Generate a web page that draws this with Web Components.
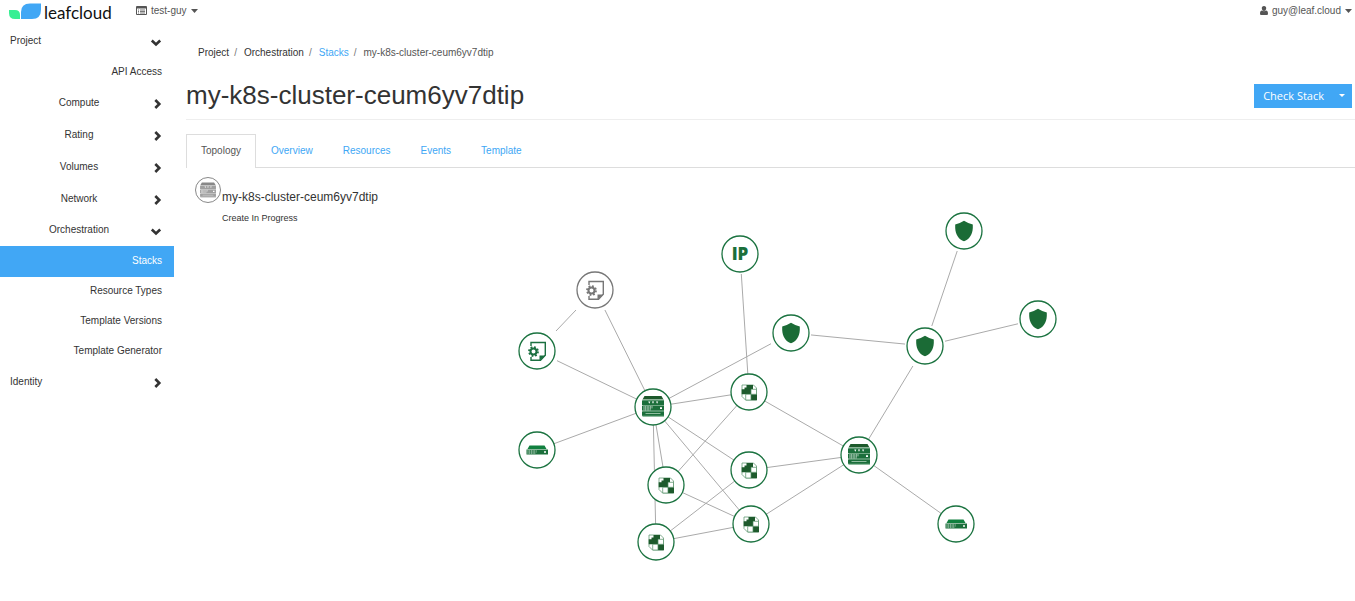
<!DOCTYPE html>
<html lang="en">
<head>
<meta charset="utf-8">
<title>my-k8s-cluster-ceum6yv7dtip - leafcloud</title>
<style>
body { margin: 0; background: #fff; color: #333; font: 10px/16px "Liberation Sans", Arial, sans-serif; --blue: #41a7f5; }
</style>
</head>
<body>
<app-shell>
  <top-bar slot="top"></top-bar>
  <side-nav slot="side">
    <nav-group label="Project" level="top" open>
      <nav-link>API Access</nav-link>
      <nav-group label="Compute"></nav-group>
      <nav-group label="Rating"></nav-group>
      <nav-group label="Volumes"></nav-group>
      <nav-group label="Network"></nav-group>
      <nav-group label="Orchestration" open>
        <nav-link active>Stacks</nav-link>
        <nav-link>Resource Types</nav-link>
        <nav-link>Template Versions</nav-link>
        <nav-link>Template Generator</nav-link>
      </nav-group>
    </nav-group>
    <nav-group label="Identity" level="top"></nav-group>
  </side-nav>
  <bread-crumbs></bread-crumbs>
  <page-title>my-k8s-cluster-ceum6yv7dtip</page-title>
  <tab-bar></tab-bar>
  <stack-topology></stack-topology>
</app-shell>
<script>
const define = (name, html, setup) => customElements.define(name, class extends HTMLElement {
  constructor() {
    super();
    const t = document.createElement('template');
    t.innerHTML = html;
    this.attachShadow({ mode: 'open' }).append(t.content.cloneNode(true));
    if (setup) setup(this, this.shadowRoot);
  }
});

define('app-shell', `
<style>
:host { display: block; }
.cols { display: grid; grid-template-columns: 174px minmax(0, 1fr); }
main { padding: 19px 0 0 12px; }
</style>
<slot name="top"></slot>
<div class="cols"><slot name="side"></slot><main><slot></slot></main></div>`);

define('top-bar', `
<style>
:host { display: block; color: #555; }
header { display: flex; align-items: flex-start; height: 26px; box-sizing: border-box; padding: 2px 3px 0 9px; }
a { display: flex; color: #111; text-decoration: none; }
.logo { width: 115px; height: 22px; margin-right: 12px; }
button { display: flex; align-items: center; gap: 4px; padding: 0; border: 0; background: none; color: inherit; font: inherit; height: 17px; }
.user { margin-left: auto; }
</style>
<header>
  <a class="logo" href="#" aria-label="leafcloud home">
    <svg width="115" height="22" viewBox="0 0 115 22">
      <path fill="#37ef93" d="M0 8h6q5 0 5 5v4H6q-6 0-6-6z"/>
      <path fill="#41a7f5" d="M12 17V10q0-8.500 9-8.500h11v6q0 9.500-9 9.500z"/>
      <text x="35" y="17" font-family="Lato, sans-serif" font-size="17" fill="#111">leafcloud</text>
    </svg>
  </a>
  <button type="button">
    <svg width="11" height="10" viewBox="0 0 11 10"><path fill="#555" fill-rule="evenodd" d="M0 1q0-1 1-1h9q1 0 1 1v7q0 1-1 1H1q-1 0-1-1zM1 2.500v5.500h9V2.500z"/><path stroke="#555" stroke-width=".8" d="M2 4h1M4 4h5M2 5.500h1M4 5.500h5M2 7h1M4 7h5"/></svg>
    test-guy
    <svg width="7" height="4" viewBox="0 0 7 4"><path fill="#555" d="M0 0h7L3.500 4z"/></svg>
  </button>
  <button type="button" class="user">
    <svg width="8" height="9" viewBox="0 0 8 9"><path fill="#555" d="M4 0c1.600 0 2.200 1 2.200 2.200S5.400 5 4 5 1.800 3.400 1.800 2.200 2.400 0 4 0zM0 7.500C0 5.500.8 4.500 2 4.500q2 1.500 4 0c1.200 0 2 1 2 3Q8 9 7 9H1Q0 9 0 7.500z"/></svg>
    guy@leaf.cloud
    <svg width="7" height="4" viewBox="0 0 7 4"><path fill="#555" d="M0 0h7L3.500 4z"/></svg>
  </button>
</header>`);

define('side-nav', `<style>:host { display: block; } nav { display: block; }</style><nav><slot></slot></nav>`);

define('nav-group', `
<style>
:host { display: block; }
button { display: flex; align-items: center; width: 100%; height: 32px; padding: 0 10px 1px 10px; border: 0; background: none; color: inherit; font: inherit; text-align: center; }
:host([open]) > button { height: 31px; }
span { flex: 1; }
:host([level=top]) span { text-align: left; }
svg { flex: none; }
:host(:not([open])) div { display: none; }
</style>
<button type="button"><span></span></button><div><slot></slot></div>`, (el, root) => {
  const open = el.hasAttribute('open');
  const b = root.querySelector('button');
  b.setAttribute('aria-expanded', open);
  root.querySelector('span').textContent = el.getAttribute('label');
  b.insertAdjacentHTML('beforeend', `<svg width="16" height="12" viewBox="0 0 16 12"><path fill="none" stroke="#333" stroke-width="2.600" d="${open ? 'M3.800 5.500l4.200 4 4.200-4' : 'M7.300 3l4 4-4 4'}"/></svg>`);
});

define('nav-link', `
<style>
:host { display: block; }
a { display: block; height: 30px; padding-right: 12px; text-align: right; line-height: 30px; color: inherit; text-decoration: none; }
:host([active]) a { height: 31px; margin-bottom: -1px; background: var(--blue); color: #fff; }
</style>
<a href="#"><slot></slot></a>`);

define('bread-crumbs', `
<style>
:host { display: block; }
ol { display: flex; margin: 0; padding: 0 12px; list-style: none; }
li + li::before { content: "/"; padding: 0 7px 0 5px; color: #777; }
a { color: #333; text-decoration: none; }
.link { color: var(--blue); }
.here { color: #555; }
</style>
<ol><li><a href="#">Project</a></li><li><a href="#">Orchestration</a></li><li><a class="link" href="#">Stacks</a></li><li class="here">my-k8s-cluster-ceum6yv7dtip</li></ol>`);

define('page-title', `
<style>
:host { display: block; }
header { display: flex; align-items: center; justify-content: space-between; height: 47px; margin: 11px 0 14px; padding-right: 3px; border-bottom: 1px solid #eee; }
h1 { margin: 0; padding-bottom: 2px; font-size: 26px; line-height: 32px; font-weight: 400; }
.split { display: flex; color: #fff; }
button { height: 24px; border: 0; padding: 0 8px 0 9px; background: var(--blue); color: inherit; font: 11px/16px "Open Sans", sans-serif; }
.more { display: flex; align-items: center; padding: 0 7px; }
</style>
<header><h1><slot></slot></h1>
<div class="split"><button type="button">Check Stack</button><button type="button" class="more" aria-label="More actions"><svg width="6" height="3" viewBox="0 0 6 3"><path fill="#fff" d="M0 0h6L3 3z"/></svg></button></div></header>`);

define('tab-bar', `
<style>
:host { display: block; }
ul { display: flex; margin: 0; padding: 0; list-style: none; border-bottom: 1px solid #ddd; }
a { display: block; padding: 0 14px 1px; border: 1px solid transparent; border-bottom: 0; line-height: 31px; color: var(--blue); text-decoration: none; }
.on { margin-bottom: -1px; padding-bottom: 2px; border-color: #ddd; background: #fff; color: #555; }
</style>
<ul><li><a class="on" href="#">Topology</a></li><li><a href="#">Overview</a></li><li><a href="#">Resources</a></li><li><a href="#">Events</a></li><li><a href="#">Template</a></li></ul>`);

const server = (a, b, c) => `
  <path fill="${b}" d="M-8.500-11H8.500L10.500-7.500H-10.500z"/>
  <path fill="${c}" d="M-10.500-7.500h21.500v17.500h-21.500z"/>
  <path fill="${a}" d="M-11-6.500h22v4.500h-22zM-11-1.200h22v4.700h-22zM-11 4.600h22v4.200h-22z"/>
  <path fill="#fff" d="M-4.800-5.500h2.200l-1.100 2.200zM-1.100-5.500h2.200L0-3.300zM3-5.500h2.200L4.100-3.300zM7 .300h2v1.700H7z"/>
  <path stroke="#fff" stroke-width=".700" stroke-dasharray="1 .600" d="M-9.500-.300h9M-9.500 .800h9M-9.500 1.900h8M-9.500 3h7"/>
  <path fill="${c}" d="M-7.500 6h15v1h-15z"/>`;
const file = (a) => `
  <path fill="none" stroke="${a}" stroke-width="1.400" d="M-6-5V-8.500H8.300V4.300L3.500 9.300H-6V6"/>
  <path fill="${a}" d="M2.500 9.800V4.500H8.500z"/>
  <circle r="3" cx="-3.500" cy="0.500" fill="#fff" stroke="${a}" stroke-width="2"/>
  <circle r="4.500" cx="-3.500" cy="0.500" fill="none" stroke="${a}" stroke-width="1.800" stroke-dasharray="1.800 1.734"/>`;
const icons = {
  server: server('#1b6f3b', '#1d5a2c', '#8fbd9f'),
  file: file('#1b7040'),
  filegray: file('#777'),
  ip: '<text y="6" text-anchor="middle" font-family="Open Sans, sans-serif" font-weight="800" font-size="17" fill="#1b6f3b">IP</text>',
  shield: '<path fill="#1b6b36" d="M0-10.300Q4.500-7.500 8.800-6.500V-3C8.500 4 5 8.500 0 10.300-5 8.500-8.500 4-8.800-3V-6.500Q-4.500-7.500 0-10.300z"/>',
  volume: '<path fill="#11803f" d="M-7.500-4.500H7.500L9.500-1H-9.500z"/><path fill="#1b6f3b" d="M-10.500-.500h21.500v5h-21.500z"/><path stroke="#fff" stroke-width=".700" stroke-dasharray="1 .700" d="M-9.500 .800h9M-9.500 2h9M-9.500 3.200h8"/><path fill="#fff" d="M7 1.300h2v1.500H7z"/>',
  port: `<path fill="#fff" stroke="#4f8c62" stroke-width=".700" d="M-7-7H4.500L7.500-4V8H-3.500L-7 4.500z"/>
    <path fill="#1d5a2c" d="M-2.500-7H4V-2.700H2V2.300H-7.300V-2.700H-4.500V-4.500H-2.500zM2 2.300h6v6H2z"/>
    <path fill="#fff" stroke="#4f8c62" stroke-width=".700" d="M2-2.700h5.500v5H2zM-3.300 2.300H2V8h-5.300z"/>`
};
const nodes = {
  cfgA: ['filegray', 595, 290], cfgB: ['file', 537, 351], ip: ['ip', 740, 254],
  sgA: ['shield', 791, 333], sgB: ['shield', 925, 346], sgC: ['shield', 964, 231], sgD: ['shield', 1038, 319],
  srvA: ['server', 653, 407], srvB: ['server', 859, 455], volA: ['volume', 537, 450], volB: ['volume', 956, 524],
  pA: ['port', 749, 392], pB: ['port', 749, 470], pC: ['port', 666, 485], pD: ['port', 751, 524], pE: ['port', 656, 542]
};
const links = `cfgA-cfgB cfgA-srvA cfgB-srvA volA-srvA srvA-sgA srvA-pA srvA-pB srvA-pC srvA-pD srvA-pE sgA-sgB sgB-sgC sgB-sgD sgB-srvB
  ip-pA pA-srvB pA-pC pB-srvB pB-pE pD-srvB pD-pC pD-pE srvB-volB`.split(/\s+/);

define('stack-topology', `
<style>
:host { display: block; position: relative; }
svg.graph { display: block; }
.info { position: absolute; left: 9px; top: 9px; display: flex; gap: 1px; }
.info svg { flex: none; }
h2 { margin: 12px 0 0; font-size: 12px; line-height: 16px; font-weight: 400; }
p { margin: 5px 0 0; font-size: 9px; line-height: 16px; }
</style>
<svg class="graph" width="1160" height="412" viewBox="186 168 1160 412" role="img" aria-label="Stack resource topology"></svg>
<div class="info">
  <svg width="26" height="26" viewBox="-13 -13 26 26"><circle r="12.500" fill="#fff" stroke="#888"/><g transform="translate(0 .5) scale(.72)">${server('#a0a0a0', '#888', '#ccc')}</g></svg>
  <div><h2>my-k8s-cluster-ceum6yv7dtip</h2><p>Create In Progress</p></div>
</div>`, (el, root) => {
  root.querySelector('.graph').innerHTML =
    links.map(l => {
      const [a, b] = l.split('-').map(k => nodes[k]);
      return `<path stroke="#aaa" d="M${a[1]} ${a[2]}L${b[1]} ${b[2]}"/>`;
    }).join('') +
    Object.values(nodes).map(([k, x, y]) => {
      const boxed = /file|ip|shield/.test(k) ? '<rect x="-20" y="-20" width="40" height="40" fill="#fff"/>' : '';
      return `<g transform="translate(${x} ${y})">${boxed}<circle r="18" fill="#fff" stroke="${k === 'filegray' ? '#777' : '#1b7340'}" stroke-width="1.300"/>${icons[k]}</g>`;
    }).join('');
});
</script>
</body>
</html>
